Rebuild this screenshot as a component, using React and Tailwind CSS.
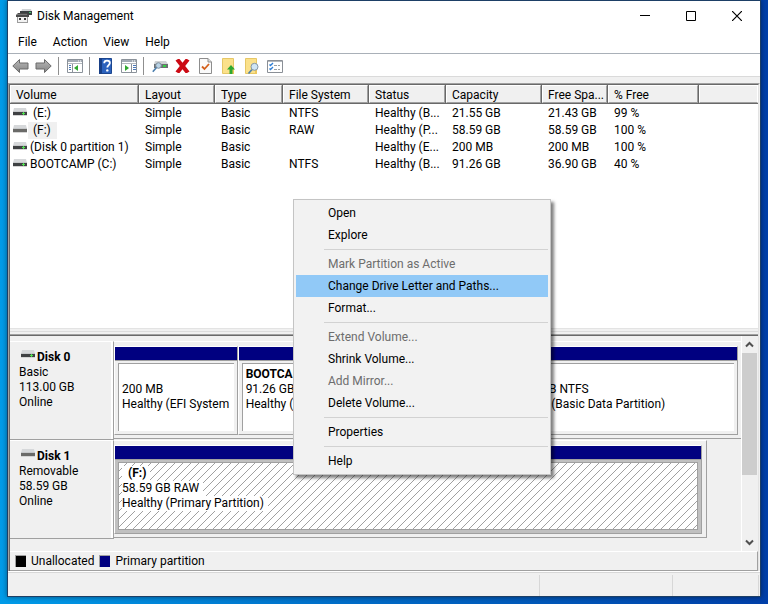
const volumes = [
  { name: '\u00a0(E:)', layout: 'Simple', type: 'Basic', fs: 'NTFS', status: 'Healthy (B...', capacity: '21.55 GB', free: '21.43 GB', pct: '99 %', led: true },
  { name: '\u00a0(F:)', layout: 'Simple', type: 'Basic', fs: 'RAW', status: 'Healthy (P...', capacity: '58.59 GB', free: '58.59 GB', pct: '100 %', led: false, selected: true },
  { name: '(Disk 0 partition 1)', layout: 'Simple', type: 'Basic', fs: '', status: 'Healthy (E...', capacity: '200 MB', free: '200 MB', pct: '100 %', led: true },
  { name: 'BOOTCAMP (C:)', layout: 'Simple', type: 'Basic', fs: 'NTFS', status: 'Healthy (B...', capacity: '91.26 GB', free: '36.90 GB', pct: '40 %', led: true },
];

const columns = [
  { label: 'Volume', width: 'w-[129px]' },
  { label: 'Layout', width: 'w-[76px]' },
  { label: 'Type', width: 'w-[68px]' },
  { label: 'File System', width: 'w-[86px]' },
  { label: 'Status', width: 'w-[77px]' },
  { label: 'Capacity', width: 'w-[96px]' },
  { label: 'Free Spa...', width: 'w-[66px]' },
  { label: '% Free', width: 'w-[91px]' },
];

const contextMenu = [
  [{ label: 'Open' }, { label: 'Explore' }],
  [{ label: 'Mark Partition as Active', disabled: true }, { label: 'Change Drive Letter and Paths...', active: true }, { label: 'Format...' }],
  [{ label: 'Extend Volume...', disabled: true }, { label: 'Shrink Volume...' }, { label: 'Add Mirror...', disabled: true }, { label: 'Delete Volume...' }],
  [{ label: 'Properties' }],
  [{ label: 'Help' }],
];

function DriveIcon({ led }) {
  return (
    <svg width="14" height="8" viewBox="0 0 14 8" className="shrink-0" aria-hidden="true">
      <path d="M1 0h12l1 4H0z" fill="#d6d8da" />
      <path d="M0 3h14v1H0z" fill="#c6c8ca" />
      <path d="M0 4h14v3H0z" fill={led ? '#3f4143' : '#6a6a68'} />
      <path d="M0 7h14v1H0z" fill="#d4d4d4" />
      {led && <path d="M9 5h3v1H9zM10 4h1v3h-1z" fill="#4fe04f" />}
    </svg>
  );
}

function AppIcon() {
  return (
    <svg width="16" height="16" viewBox="0 0 16 16" aria-hidden="true">
      <path d="M6 1h9l1 3H5z" fill="#d0d3d5" />
      <path d="M4 3h12v4H4z" fill="#3b3f42" />
      <path d="M13 4h2v1h-2z" fill="#3fcf6f" />
      <path d="M0 7l2-2h9l2 2v2H0z" fill="#4a4a4a" />
      <path d="M1 6h10v1H1z" fill="#777" />
      <path d="M1 9h11v6H1z" fill="#9c9c9c" />
      <path d="M2 9h9v5H2z" fill="#f2f2f2" />
      <path d="M3 10h2v2H3zM8 10h2v2H8z" fill="#3c3c3c" />
    </svg>
  );
}

function Arrow({ flip }) {
  return (
    <svg width="17" height="16" viewBox="0 0 17 16" aria-hidden="true">
      <defs>
        <linearGradient id={flip ? 'arrowR' : 'arrowL'} x1="0" y1="0" x2="0" y2="1">
          <stop offset="0" stopColor="#b8b8b8" />
          <stop offset="1" stopColor="#858585" />
        </linearGradient>
      </defs>
      <path
        d={flip ? 'M16.2 8 9.5 14.5V11H1V5h8.500V1.500z' : 'M.8 8 7.500 1.500V5H16v6H7.500v3.500z'}
        fill={flip ? 'url(#arrowR)' : 'url(#arrowL)'}
        stroke="#6b6b6b"
        strokeLinejoin="round"
      />
    </svg>
  );
}

function PanelIcon({ right }) {
  return (
    <svg width="16" height="14" viewBox="0 0 16 14" aria-hidden="true">
      <path d="M.5.5h15v13H.5z" fill="#fff" stroke="#8b929a" />
      <path d="M1 1h14v2H1z" fill="#a3abb5" />
      <path d="M11 1.500h1v1h-1zM13 1.500h1v1h-1z" fill="#fff" />
      <path d="M1 4h14v1H1z" fill="#b5bac0" />
      <path d={right ? 'M10 5h1v8h-1z' : 'M5 5h1v8H5z'} fill="#8b929a" />
      {right ? (
        <path d="M12 6h3v1h-3zM12 8h3v1h-3zM12 10h3v1h-3z" fill="#4a77b8" />
      ) : (
        <path d="M2 6h2v1H2zM2 8h2v1H2zM2 10h2v1H2z" fill="#4a77b8" />
      )}
      <path d={right ? 'M4 6v6l4-3z' : 'M11 6v6L7 9z'} fill="#30a830" />
    </svg>
  );
}

function HelpIcon() {
  return (
    <svg width="13" height="16" viewBox="0 0 13 16" aria-hidden="true">
      <path d="M.5.5h12v15H.5z" fill="#2c62bd" stroke="#1c468f" />
      <path d="M0 0h3v16H0z" fill="#183f86" />
      <path d="M5.200 5.200C5.200 3.400 6.500 2.700 8 2.700s2.900.8 2.900 2.400C10.900 7 8.300 7.400 8.300 9.600" fill="none" stroke="#fff" strokeWidth="1.800" />
      <circle cx="8.300" cy="12.400" r="1.200" fill="#fff" />
    </svg>
  );
}

function SearchDriveIcon() {
  return (
    <svg width="16" height="14" viewBox="0 0 16 14" aria-hidden="true">
      <path d="M3 2h11l2 3H2z" fill="#cfd2d4" />
      <path d="M2 5h14v4H2z" fill="#6b6f72" />
      <path d="M11 6h3v2h-3z" fill="#35d045" />
      <circle cx="6.500" cy="6.500" r="2.800" fill="#b9d3e6" stroke="#7d8c99" />
      <path d="M4.500 8.500.8 12.800" stroke="#4c7fae" strokeWidth="1.600" />
    </svg>
  );
}

function DeleteIcon() {
  return (
    <svg width="15" height="14" viewBox="0 0 15 14" aria-hidden="true">
      <path d="M.5 1.500 3 0h1.500l3 3.800L10.500 0H12l2.500 1.500L10.200 7l4.300 5.500L12 14h-1.500l-3-3.800L4.500 14H3L.5 12.500 4.800 7z" fill="#cc0a14" />
    </svg>
  );
}

function CheckPageIcon() {
  return (
    <svg width="13" height="16" viewBox="0 0 13 16" aria-hidden="true">
      <path d="M.5.5h8.500l3.500 3.500v11.500H.5z" fill="#fafafa" stroke="#8d8d8d" />
      <path d="M9 .5V4h3.500" fill="#ddd" stroke="#8d8d8d" />
      <path d="m3 8.500 2.500 2.500L10 6" fill="none" stroke="#d4601c" strokeWidth="1.800" />
    </svg>
  );
}

function FolderIcon({ search }) {
  return (
    <svg width="15" height="16" viewBox="0 0 15 16" aria-hidden="true">
      <path d="M1.500.5h11v15h-11z" fill="#fbe18a" stroke="#e6c766" />
      <path d="M11 10h2v6h-2z" fill="#edc85e" />
      {search ? (
        <g>
          <path d="M8 11.500 4.500 15.500" stroke="#4c7fae" strokeWidth="1.600" />
          <circle cx="10.500" cy="8.800" r="3.500" fill="#cfe5f5" stroke="#8396a5" />
        </g>
      ) : (
        <path d="M10 7l4 4.500h-2.500V16h-3v-4.500H6z" fill="#2fa82f" />
      )}
    </svg>
  );
}

function ListIcon() {
  return (
    <svg width="16" height="13" viewBox="0 0 16 13" aria-hidden="true">
      <path d="M.5.5h15v12H.5z" fill="#fff" stroke="#8a8f96" />
      <path d="M1 1h14v1H1z" fill="#b2b7bd" />
      <path d="m2.500 4.500 1 1L6 3M2.500 8.500l1 1L6 7" fill="none" stroke="#2f7fd8" strokeWidth="1.400" />
      <path d="M7 5h3v1H7zM11 5h2v1h-2zM7 9h3v1H7zM11 9h2v1h-2z" fill="#9aa0a6" />
    </svg>
  );
}

function Hatch() {
  return (
    <svg className="absolute inset-0 h-full w-full" aria-hidden="true">
      <defs>
        <pattern id="hatch" width="8" height="8" patternUnits="userSpaceOnUse">
          <path d="M0 7h1v1H0zM1 6h1v1H1zM2 5h1v1H2zM3 4h1v1H3zM4 3h1v1H4zM5 2h1v1H5zM6 1h1v1H6zM7 0h1v1H7z" fill="#a0a0a0" />
        </pattern>
      </defs>
      <rect width="100%" height="100%" fill="url(#hatch)" />
    </svg>
  );
}

function ToolButton({ label, children }) {
  return (
    <button type="button" aria-label={label} className="flex h-full w-[23px] items-center justify-center">
      {children}
    </button>
  );
}

function ToolSeparator() {
  return <div className="ml-[3px] mr-1 h-[18px] w-px bg-[#8f8f8f]" />;
}

function TitleBar() {
  return (
    <header className="flex h-[30px] items-center pl-2">
      <AppIcon />
      <h1 className="ml-[5px] flex-1">Disk Management</h1>
      <button type="button" aria-label="Minimize" className="flex h-full w-[46px] items-center justify-center">
        <svg width="10" height="10" viewBox="0 0 10 10"><path d="M0 4h10v1H0z" /></svg>
      </button>
      <button type="button" aria-label="Maximize" className="flex h-full w-[46px] items-center justify-center">
        <svg width="10" height="10" viewBox="0 0 10 10"><path d="M.5.5h9v9h-9z" fill="none" stroke="#000" /></svg>
      </button>
      <button type="button" aria-label="Close" className="flex h-full w-[46px] items-center justify-center">
        <svg width="10" height="10" viewBox="0 0 10 10"><path d="m0 0 10 10M10 0 0 10" fill="none" stroke="#000" strokeWidth="1.200" /></svg>
      </button>
    </header>
  );
}

function VolumeTable() {
  return (
    <section className="min-h-[243px] flex-1 border-b border-[#e3e3e3] bg-white">
      <table className="w-full table-fixed border-collapse text-left">
        <thead>
          <tr>
            {columns.map((c) => (
              <th key={c.label} scope="col" className={`${c.width} p-0 pb-px font-normal`}>
                <div className="h-[19px] border-b border-r border-[#696969]">
                  <div className="h-[18px] border border-b-[#a0a0a0] border-l-white border-r-[#a0a0a0] border-t-white bg-[#f0f0f0] pl-[5px] leading-[18px]">{c.label}</div>
                </div>
              </th>
            ))}
            <td className="p-0 pb-px">
              <div className="h-[19px] border-b border-[#696969]">
                <div className="h-[18px] border border-b-[#a0a0a0] border-l-white border-r-white border-t-white bg-[#f0f0f0]" />
              </div>
            </td>
          </tr>
        </thead>
        <tbody>
          {volumes.map((v) => (
            <tr key={v.name} className="h-[17px] leading-[17px]">
              <td className="p-0">
                <div className="flex whitespace-nowrap pl-[3px] pt-0">
                  <span className="pt-[3px]"><DriveIcon led={v.led} /></span>
                  <span className={`ml-px pl-0.5 pr-1.5 ${v.selected ? 'bg-[#f0f0f0]' : ''}`}>{v.name}</span>
                </div>
              </td>
              {[v.layout, v.type, v.fs, v.status, v.capacity, v.free, v.pct].map((text, i) => (
                <td key={i} className="whitespace-nowrap p-0 pl-1.5">{text}</td>
              ))}
              <td />
            </tr>
          ))}
        </tbody>
      </table>
    </section>
  );
}

function Partition({ grow, name, lines, selected }) {
  const text = selected ? 'relative w-fit bg-white pr-1' : '';
  return (
    <div className={`${grow} flex min-w-0 flex-col border border-b-[#a0a0a0] border-l-white border-r-[#a0a0a0] border-t-white ${selected ? 'bg-[#c0c0c0]' : 'bg-[#f0f0f0]'}`}>
      <div className="h-3.5 border-b border-[#a0a0a0] bg-[#000080]" />
      <div className="px-[3px] pb-[3px] pt-0.5">
        <div
          className={`relative h-[68px] overflow-hidden whitespace-nowrap bg-white pl-[3px] pt-[3px] leading-[15px] ${
            selected ? 'border border-[#a0a0a0]' : 'border-l border-t border-[#a0a0a0]'
          }`}
        >
          {selected && <Hatch />}
          <p className={`h-[15px] font-bold ${text}`}>{name}</p>
          {lines.map((l) => (
            <p key={l} className={text}>{l}</p>
          ))}
        </div>
      </div>
    </div>
  );
}

function DiskRow({ title, lines, led, narrow, children }) {
  return (
    <div className="flex h-[99px]">
      <div className="w-[104px] shrink-0 border-b border-r border-t border-b-[#a0a0a0] border-r-[#a0a0a0] border-t-white">
        <div className="h-full border-r-2 border-white pl-[9px] pt-2 leading-[15px]">
          <div className="flex pl-0.5">
            <DriveIcon led={led} />
            <h2 className="ml-0.5 font-bold">{title}</h2>
          </div>
          {lines.map((l) => (
            <p key={l}>{l}</p>
          ))}
        </div>
      </div>
      <div className={`mb-px flex min-w-0 flex-1 border-b border-t border-b-[#a0a0a0] border-t-white pb-[3px] pt-1 ${narrow ? 'mr-[34px] border-r border-r-[#a0a0a0] pr-1' : 'pr-[3px]'}`}>
        {children}
      </div>
    </div>
  );
}

function Scrollbar() {
  return (
    <div className="flex w-[17px] shrink-0 flex-col border-l border-white pr-px">
      <button type="button" aria-label="Scroll up" className="flex h-[17px] items-center justify-center">
        <svg width="9" height="7" viewBox="0 0 9 7"><path d="m1 5.500 3.500-3.500L8 5.500" fill="none" stroke="#505050" strokeWidth="2" /></svg>
      </button>
      <div className="h-[122px] bg-[#cdcdcd]" />
      <div className="flex-1" />
      <button type="button" aria-label="Scroll down" className="flex h-[17px] items-center justify-center">
        <svg width="9" height="7" viewBox="0 0 9 7"><path d="m1 1.500 3.500 3.500L8 1.500" fill="none" stroke="#505050" strokeWidth="2" /></svg>
      </button>
    </div>
  );
}

function DiskPane() {
  return (
    <section className="flex border-t border-[#696969] bg-[#f0f0f0]">
      <div className="min-w-0 flex-1 pb-3 pt-[5px]">
        <DiskRow title="Disk 0" led lines={['Basic', '113.00 GB', 'Online']}>
          <Partition grow="flex-[123]" lines={['200 MB', 'Healthy (EFI System']} />
          <Partition grow="flex-[263]" name="BOOTCAMP" lines={['91.26 GB', 'Healthy (Boot']} />
          <Partition grow="flex-[239]" lines={['21.55 GB NTFS', 'Healthy (Basic Data Partition)']} />
        </DiskRow>
        <DiskRow title="Disk 1" narrow lines={['Removable', '58.59 GB', 'Online']}>
          <Partition grow="flex-1" selected name={'\u00a0\u00a0(F:)'} lines={['58.59 GB RAW', 'Healthy (Primary Partition)']} />
        </DiskRow>
      </div>
      <Scrollbar />
    </section>
  );
}

function ContextMenu() {
  return (
    <div role="menu" className="absolute left-[293px] top-[199px] w-[258px] border border-[#c4c4c4] bg-[#f2f2f2] p-0.5 shadow-[3px_3px_3px_rgba(0,0,0,0.5)]">
      {contextMenu.map((group, g) => (
        <div key={g} role="group" className={g ? 'pt-[7px]' : ''}>
          {g > 0 && <div className="-mt-1 mb-[3px] ml-7 h-px bg-[#d2d2d2]" />}
          {group.map((item) => (
            <button
              key={item.label}
              type="button"
              role="menuitem"
              disabled={item.disabled}
              className={`block h-[22px] w-full pl-8 text-left ${item.active ? 'bg-[#91c9f7]' : ''} ${item.disabled ? 'text-[#6d6d6d]' : ''}`}
            >
              {item.label}
            </button>
          ))}
        </div>
      ))}
    </div>
  );
}

export default function App() {
  return (
    <div className="relative flex min-h-screen flex-col bg-linear-to-r from-[#009be8] via-[#0068c4] to-[#003fa8] px-[7px] pb-[7px] font-[Roboto,'Liberation_Sans',sans-serif] text-[12px] leading-4 text-black">
      <main className="flex flex-1 flex-col border border-[#1d3f66] bg-white shadow-[0_0_5px_rgba(0,0,0,0.45)]">
        <TitleBar />
        <nav aria-label="Menu bar" className="flex h-[23px] border-b border-[#a9b0b8] pl-0.5">
          {['File', 'Action', 'View', 'Help'].map((m) => (
            <button key={m} type="button" className="px-2">{m}</button>
          ))}
        </nav>
        <div role="toolbar" aria-label="Tools" className="flex h-[23px] items-center border-b border-[#dadada] pl-px pt-0.5">
          <ToolButton label="Back"><Arrow /></ToolButton>
          <ToolButton label="Forward"><Arrow flip /></ToolButton>
          <ToolSeparator />
          <ToolButton label="Show console tree"><PanelIcon /></ToolButton>
          <ToolSeparator />
          <ToolButton label="Help"><HelpIcon /></ToolButton>
          <ToolButton label="Show action pane"><PanelIcon right /></ToolButton>
          <ToolSeparator />
          <ToolButton label="Rescan disks"><SearchDriveIcon /></ToolButton>
          <ToolButton label="Delete"><DeleteIcon /></ToolButton>
          <ToolButton label="Properties"><CheckPageIcon /></ToolButton>
          <ToolButton label="Open"><FolderIcon /></ToolButton>
          <ToolButton label="Explore"><FolderIcon search /></ToolButton>
          <ToolButton label="Settings"><ListIcon /></ToolButton>
        </div>
        <div className="flex flex-1 flex-col bg-[#f0f0f0] pt-1.5">
          <div className="flex flex-1 flex-col border-l border-r border-t border-l-[#a0a0a0] border-r-[#f0f0f0] border-t-[#a0a0a0]">
            <div className="flex flex-1 flex-col border-l border-r border-t border-l-[#696969] border-r-[#e3e3e3] border-t-[#696969]">
              <VolumeTable />
              <div className="flex h-1.5 flex-col justify-center border-b border-[#a0a0a0] bg-[#f0f0f0]">
                <div className="h-px bg-[#dcdcdc]" />
              </div>
              <DiskPane />
              <div className="flex h-5 items-center border-b border-r border-t border-b-[#a0a0a0] border-r-[#a0a0a0] border-t-white pl-[5px]">
                <span className="mr-[5px] h-3 w-[11px] border-l border-t border-[#a0a0a0] bg-black" />
                <span>Unallocated</span>
                <span className="mx-[5px] h-3 w-[11px] border-l border-t border-[#a0a0a0] bg-[#000080]" />
                <span>Primary partition</span>
              </div>
            </div>
          </div>
          <footer className="flex h-[25px] border-t border-white">
            <div className="flex flex-1 border-t border-[#d7d7d7] pt-0.5">
              <div className="flex-1 border-r border-[#d7d7d7]" />
              <div className="w-[133px] border-r border-[#d7d7d7]" />
              <div className="mr-px w-[86px] border-r border-[#d7d7d7]" />
            </div>
          </footer>
        </div>
      </main>
      <ContextMenu />
    </div>
  );
}
